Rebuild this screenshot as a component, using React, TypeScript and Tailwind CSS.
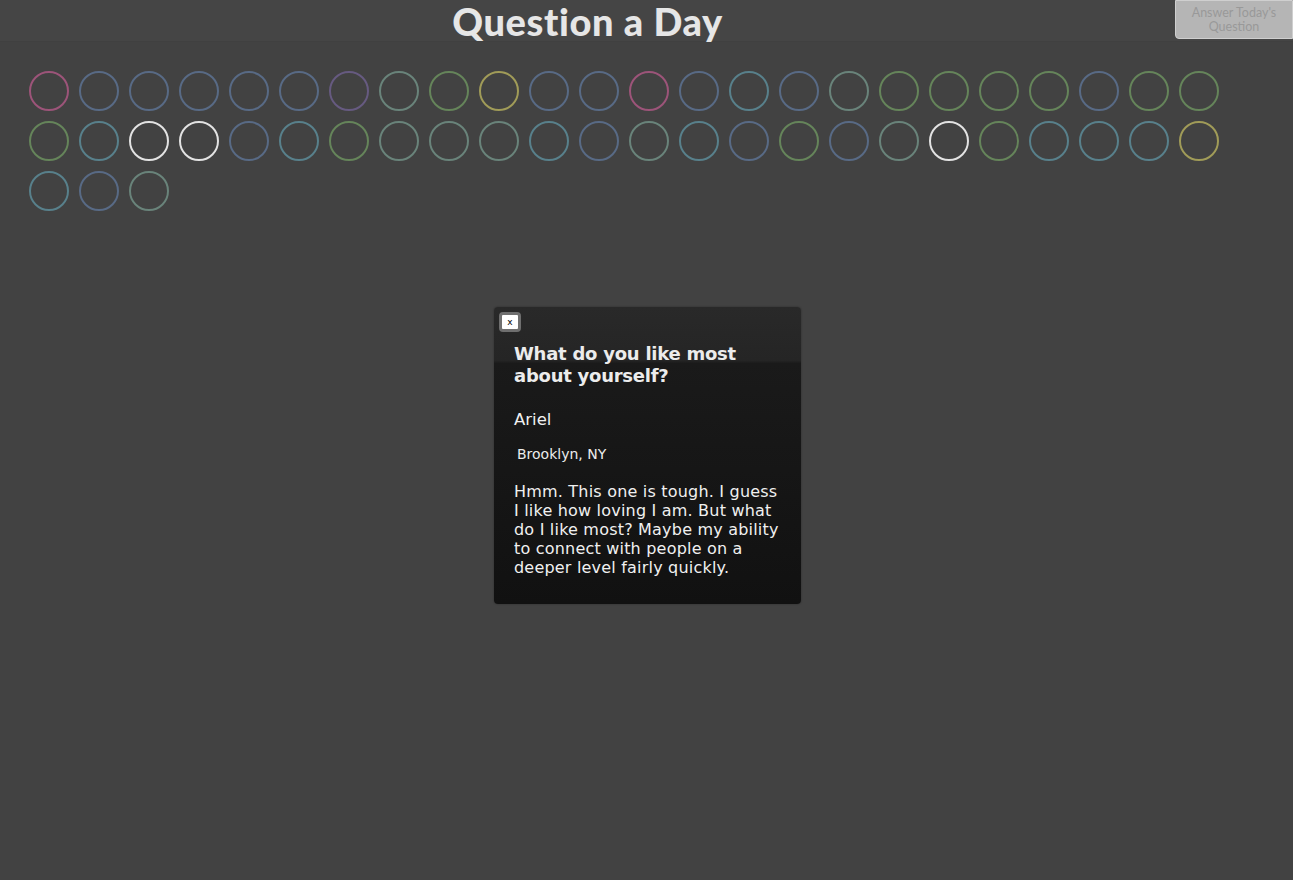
import React from 'react';

const PINK = '#9c5479';
const BLUE = '#586a85';
const TEAL = '#58808b';
const GREEN = '#65845a';
const SAGE = '#69837a';
const PURPLE = '#665a80';
const YELLOW = '#a09b58';
const WHITE = '#e2e2e2';

// circles in reading order, 24 per row
const days: string[] = [
  PINK, BLUE, BLUE, BLUE, BLUE, BLUE, PURPLE, SAGE, GREEN, YELLOW, BLUE, BLUE,
  PINK, BLUE, TEAL, BLUE, SAGE, GREEN, GREEN, GREEN, GREEN, BLUE, GREEN, GREEN,
  GREEN, TEAL, WHITE, WHITE, BLUE, TEAL, GREEN, SAGE, SAGE, SAGE, TEAL, BLUE,
  SAGE, TEAL, BLUE, GREEN, BLUE, SAGE, WHITE, GREEN, TEAL, TEAL, TEAL, YELLOW,
  TEAL, BLUE, SAGE,
];

function DayCircle({ color }: { color: string }) {
  return (
    <button
      className="w-10 h-10 rounded-full bg-transparent cursor-pointer"
      style={{ border: `2px solid ${color}` }}
    />
  );
}

export default function App() {
  return (
    <div className="min-h-screen w-full bg-[#424242] relative" style={{ fontFamily: '"DejaVu Sans", Verdana, sans-serif' }}>
      {/* Header */}
      <div className="flex h-[42px] bg-[#454545] border-b border-[#404040]">
        <div className="flex-1 flex justify-center">
          <h1
            className="text-[38px] leading-[42px] font-black text-[#e6e6e6] tracking-[0.6px]"
            style={{ fontFamily: 'Lato, "Open Sans", sans-serif' }}
          >
            Question a Day
          </h1>
        </div>
        <button
          className="w-[118px] h-[39px] bg-[#b5b5b5] border border-[#cfcfcf] rounded-bl-[4px] text-[#999] text-[12.5px] leading-[14px] flex items-center justify-center text-center"
          style={{ fontFamily: 'Lato, "Open Sans", sans-serif' }}
        >
          Answer Today's
          <br />
          Question
        </button>
      </div>

      {/* Day grid */}
      <div className="pl-[29px] pt-[29px] w-[1230px] flex flex-wrap gap-[10px]">
        {days.map((c, i) => (
          <DayCircle key={i} color={c} />
        ))}
      </div>

      {/* Answer popup */}
      <div className="absolute left-[494px] top-[307px] w-[307px] h-[297px] rounded-[4px] bg-[linear-gradient(to_bottom,#292929_0%,#252525_18%,#1a1a1a_19%,#111111_100%)] shadow-[0_0_2px_rgba(0,0,0,0.4)]">
        <button className="absolute left-[5px] top-[5px] w-[22px] h-[20px] rounded-[4px] bg-white border-[3px] border-[#6f6f6f] text-[9px] leading-none text-black flex items-center justify-center">
          x
        </button>
        <div className="pl-[20px] pr-[20px] pt-[36px]">
          <h2 className="text-[18px] leading-[22px] font-bold text-[#ececec] tracking-[-0.25px]">
            What do you like most about yourself?
          </h2>
          <p className="mt-[23px] text-[16.5px] leading-[20px] text-[#f0f0f0]">Ariel</p>
          <p className="mt-[16px] ml-[3px] text-[14px] leading-[16px] text-[#ececec]">Brooklyn, NY</p>
          <p className="mt-[20px] text-[16px] leading-[19px] text-[#f0f0f0] tracking-[0.2px]">
            Hmm. This one is tough. I guess I like how loving I am. But what do I like most? Maybe my ability to connect with people on a deeper level fairly quickly.
          </p>
        </div>
      </div>
    </div>
  );
}
